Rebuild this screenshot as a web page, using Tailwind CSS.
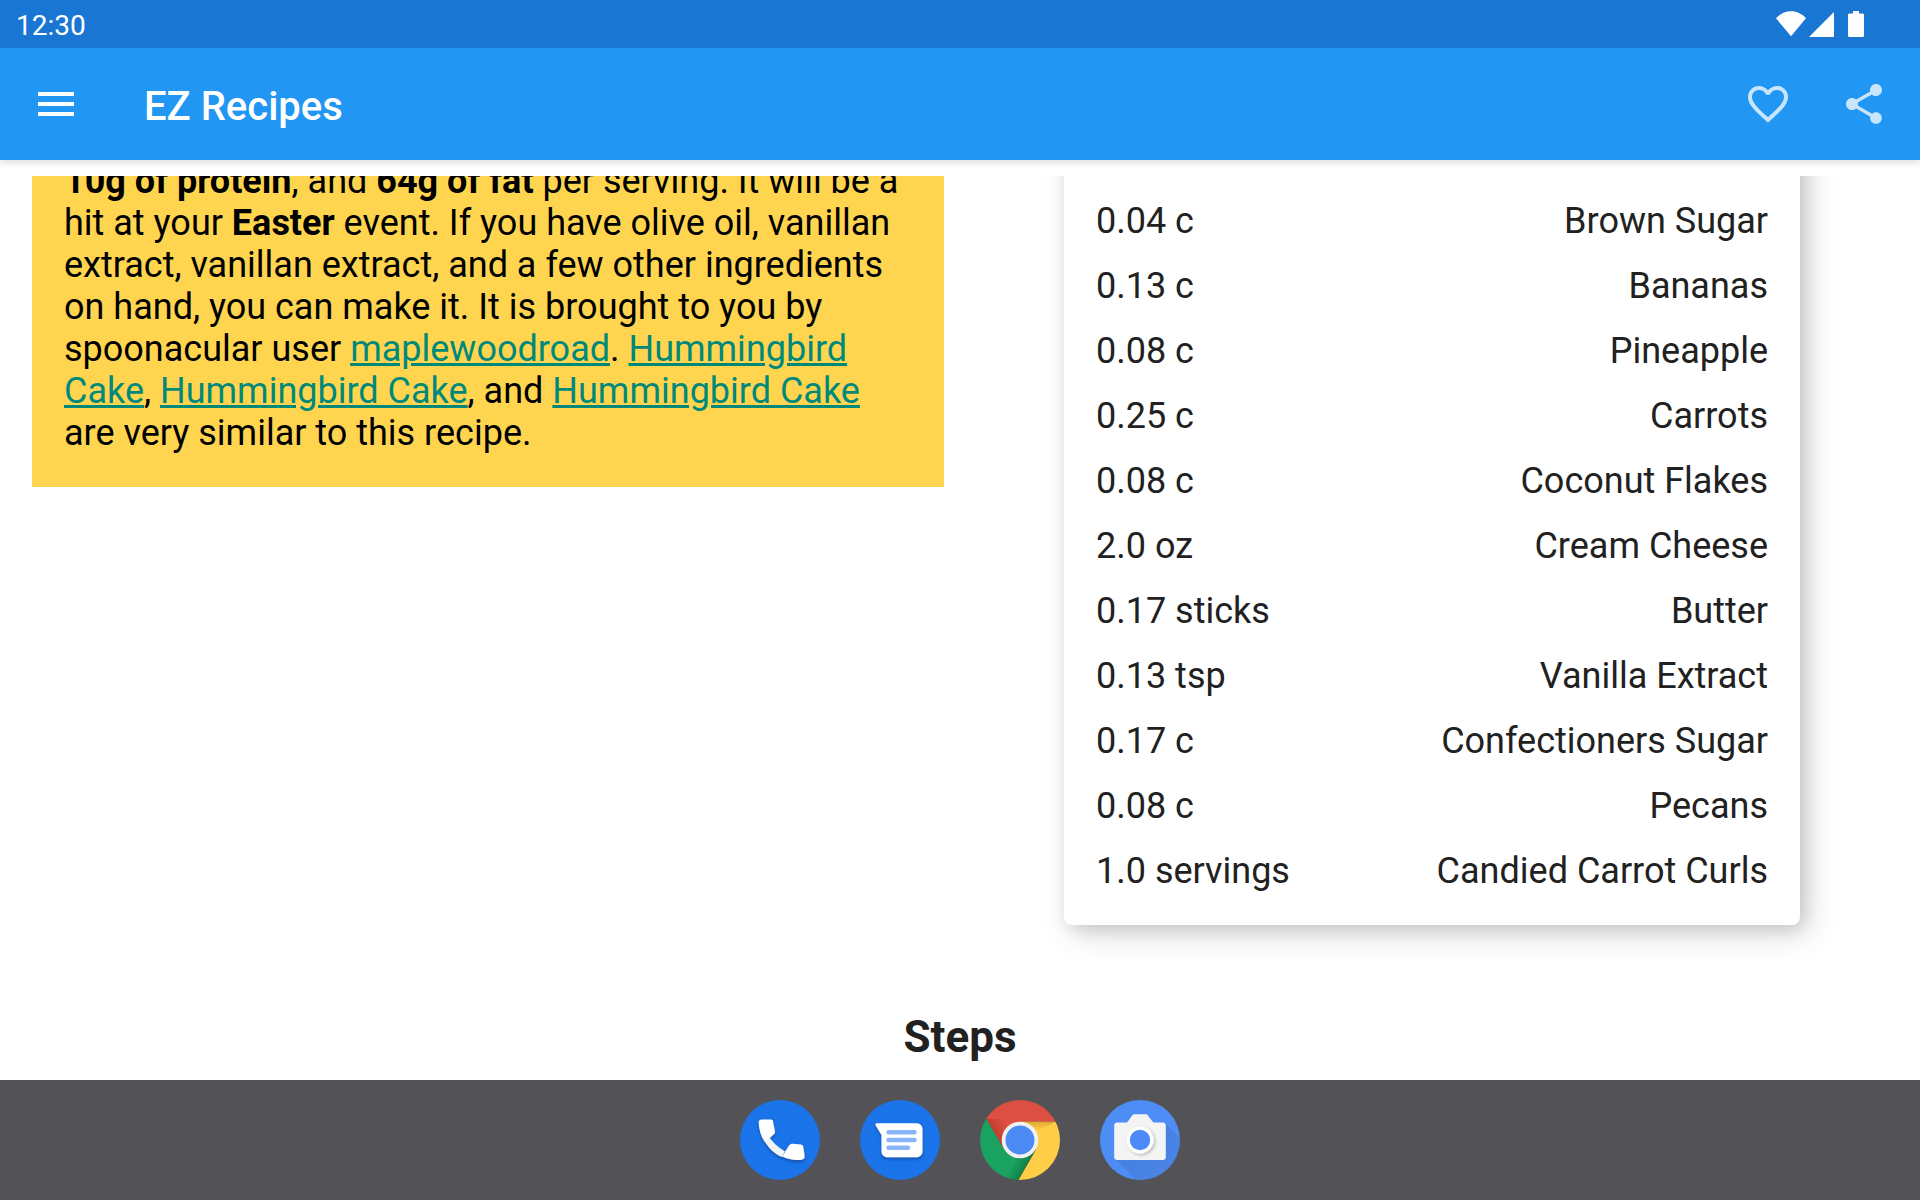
<!DOCTYPE html>
<html lang="en">
<head>
<meta charset="utf-8">
<meta name="viewport" content="width=device-width, initial-scale=1">
<title>EZ Recipes</title>
<script src="https://cdn.jsdelivr.net/npm/@tailwindcss/browser@4"></script>
</head>
<body class="flex h-screen flex-col overflow-hidden bg-white font-[Roboto,sans-serif] text-[#212121]">

  <!-- System status bar -->
  <div class="relative z-20 flex h-12 shrink-0 items-center justify-between bg-[#1976d2] pr-14 pl-4 text-white">
    <time class="pt-1 text-[28px] leading-8">12:30</time>
    <div class="flex items-center">
      <svg class="h-[26px] w-[30px]" viewBox="0 0 30 26" fill="currentColor" aria-label="Wi-Fi"><path d="M0 7.300C3.800 3 9 .3 15 .3s11.200 2.700 15 7L15 25.300z"/></svg>
      <svg class="ml-[3px] h-[26px] w-[25px]" viewBox="0 0 25 26" fill="currentColor" aria-label="Mobile signal"><path d="M25 1v25H0z"/></svg>
      <svg class="ml-[14px] h-[26px] w-4" viewBox="0 0 16 26" fill="currentColor" aria-label="Battery"><path d="M5 0h6v2.500h3.500c.9 0 1.500.6 1.500 1.500v20.500c0 .9-.6 1.500-1.500 1.500h-13C.6 26 0 25.400 0 24.500V4c0-.9.600-1.500 1.500-1.500H5z"/></svg>
    </div>
  </div>

  <!-- App bar -->
  <header class="relative z-10 flex h-28 shrink-0 items-center bg-[#2196f3] px-8 text-white shadow-[0_2px_8px_rgba(0,0,0,0.16)]">
    <button type="button" aria-label="Open menu" class="size-12">
      <svg class="size-12" viewBox="0 0 24 24" fill="currentColor"><path d="M3 18h18v-2H3v2zm0-5h18v-2H3v2zm0-7v2h18V6H3z"/></svg>
    </button>
    <h1 class="ml-16 pt-[6px] text-[40px] leading-12 font-medium">EZ Recipes</h1>
    <div class="ml-auto flex gap-12 text-white/75">
      <button type="button" aria-label="Add to favorites" class="size-12">
        <svg class="size-12" viewBox="0 0 24 24" fill="currentColor"><path d="M16.500 3c-1.740 0-3.410.81-4.500 2.090C10.910 3.810 9.240 3 7.500 3 4.420 3 2 5.420 2 8.500c0 3.780 3.400 6.860 8.550 11.540L12 21.350l1.450-1.320C18.600 15.360 22 12.280 22 8.500 22 5.420 19.580 3 16.500 3zm-4.400 15.550l-.1.100-.1-.1C7.140 14.240 4 11.390 4 8.500 4 6.500 5.500 5 7.500 5c1.540 0 3.040.99 3.570 2.360h1.870C13.460 5.990 14.960 5 16.500 5c2 0 3.500 1.500 3.500 3.500 0 2.890-3.140 5.740-7.900 10.050z"/></svg>
      </button>
      <button type="button" aria-label="Share" class="size-12">
        <svg class="size-12" viewBox="0 0 24 24" fill="currentColor"><path d="M18 16.080c-.76 0-1.440.3-1.960.77L8.910 12.700c.05-.23.090-.46.090-.7s-.04-.47-.09-.7l7.050-4.110c.54.5 1.250.81 2.040.81 1.660 0 3-1.340 3-3s-1.340-3-3-3-3 1.340-3 3c0 .24.040.47.090.7L8.040 9.810C7.500 9.310 6.790 9 6 9c-1.660 0-3 1.340-3 3s1.340 3 3 3c.79 0 1.500-.31 2.040-.81l7.120 4.160c-.05.21-.08.43-.08.65 0 1.610 1.310 2.920 2.920 2.920s2.920-1.310 2.920-2.920-1.310-2.920-2.920-2.920z"/></svg>
      </button>
    </div>
  </header>

  <!-- Recipe, scrolled part way down -->
  <main class="mt-4 min-h-0 flex-1 overflow-hidden">
    <div class="grid grid-cols-2 items-start">
      <section class="-mt-4 mr-4 ml-8 bg-[#ffd54f] px-8 pb-[33px] text-[36px] leading-[42px] text-black">
        <p><b>10g of protein</b>, and <b>64g of fat</b> per serving. It will be a hit at your <b>Easter</b> event. If you have olive oil, vanillan extract, vanillan extract, and a few other ingredients on hand, you can make it. It is brought to you by spoonacular user <a href="#" class="text-[#00897b] underline">maplewoodroad</a>. <a href="#" class="text-[#00897b] underline">Hummingbird Cake</a>, <a href="#" class="text-[#00897b] underline">Hummingbird Cake</a>, and <a href="#" class="text-[#00897b] underline">Hummingbird Cake</a> are very similar to this recipe.</p>
      </section>

      <section class="-mt-12 mr-30 ml-26 rounded-lg bg-white px-8 pt-[61px] pb-[21px] shadow-[8px_8px_32px_rgba(0,0,0,0.16),4px_4px_16px_rgba(0,0,0,0.12)]">
        <table class="w-full text-[36px] leading-[65px]" aria-label="Ingredients">
          <tbody>
            <tr><td>0.04 c</td><td class="text-right">Brown Sugar</td></tr>
            <tr><td>0.13 c</td><td class="text-right">Bananas</td></tr>
            <tr><td>0.08 c</td><td class="text-right">Pineapple</td></tr>
            <tr><td>0.25 c</td><td class="text-right">Carrots</td></tr>
            <tr><td>0.08 c</td><td class="text-right">Coconut Flakes</td></tr>
            <tr><td>2.0 oz</td><td class="text-right">Cream Cheese</td></tr>
            <tr><td>0.17 sticks</td><td class="text-right">Butter</td></tr>
            <tr><td>0.13 tsp</td><td class="text-right">Vanilla Extract</td></tr>
            <tr><td>0.17 c</td><td class="text-right">Confectioners Sugar</td></tr>
            <tr><td>0.08 c</td><td class="text-right">Pecans</td></tr>
            <tr><td>1.0 servings</td><td class="text-right">Candied Carrot Curls</td></tr>
          </tbody>
        </table>
      </section>
    </div>
    <h2 class="mt-[84px] text-center text-[44px] leading-14 font-bold">Steps</h2>
  </main>

  <!-- Dock -->
  <nav aria-label="Dock" class="flex h-30 shrink-0 items-center justify-center gap-10 bg-[#535257]">
    <a href="#" aria-label="Phone">
      <svg class="size-20" viewBox="0 0 80 80">
        <defs><filter id="drop" x="-30%" y="-30%" width="160%" height="160%"><feDropShadow dx="0" dy="2" stdDeviation="1.500" flood-color="#0b3a85" flood-opacity=".6"/></filter></defs>
        <circle cx="40" cy="40" r="40" fill="#1a73e8"/>
        <g filter="url(#drop)">
          <path d="M29.500 37.500c3.800 5.200 8 9.300 15.300 13.700L42 57c-7.500-3.300-13-8.500-17-15.200z" fill="#f1f3f4"/>
          <path d="M21.500 19.500h9.300c1.200 0 2 .8 2.200 1.800l2 10.500c.1.700-.1 1.400-.6 1.900L25 42.300c-4-6-6.200-13-6.300-19.800 0-1.700 1.200-3 2.800-3z" fill="#fff"/>
          <path d="M42.300 56.600l6.500-10.900c1.400-1.600 2.500-2 4-1.900l8 .7c1.400.2 2.300 1.100 2.500 2.500l1.300 8.700c.3 2.300-1 3.800-3 4-6.700.9-13.300-.2-19.300-3.100z" fill="#fff"/>
        </g>
      </svg>
    </a>
    <a href="#" aria-label="Messages">
      <svg class="size-20" viewBox="0 0 80 80">
        <circle cx="40" cy="40" r="40" fill="#1a73e8"/>
        <path filter="url(#drop)" d="M16.500 23.300h40c3.500 0 6 2.500 6 6v22c0 3.500-2.500 6-6 6h-29c-3.500 0-6-2.500-6-6V35l-5.700-9.300c-.6-1.200-.1-2.400.7-2.400z" fill="#fff"/>
        <path d="M28.500 32.200h26M28.500 40h26M28.500 47.800h19.500" stroke="#8ab4f8" stroke-width="4.400" stroke-linecap="round"/>
      </svg>
    </a>
    <a href="#" aria-label="Chrome">
      <svg class="size-20" viewBox="0 0 80 80">
        <defs>
          <clipPath id="disc"><circle cx="40" cy="40" r="40"/></clipPath>
          <linearGradient id="redShade" gradientUnits="userSpaceOnUse" x1="14" y1="32" x2="27" y2="24.500"><stop offset="0" stop-color="#a52714" stop-opacity=".45"/><stop offset="1" stop-color="#a52714" stop-opacity="0"/></linearGradient>
          <linearGradient id="greenShade" gradientUnits="userSpaceOnUse" x1="46" y1="68" x2="34" y2="61"><stop offset="0" stop-color="#055524" stop-opacity=".45"/><stop offset="1" stop-color="#055524" stop-opacity="0"/></linearGradient>
          <linearGradient id="yellowShade" gradientUnits="userSpaceOnUse" x1="0" y1="21.700" x2="0" y2="30"><stop offset="0" stop-color="#b7791a" stop-opacity=".45"/><stop offset="1" stop-color="#b7791a" stop-opacity="0"/></linearGradient>
        </defs>
        <g clip-path="url(#disc)">
          <path d="M0 0h80v21.700H40L24 49.200 6.500 19z" fill="#dd4f43"/>
          <path d="M6.500 19L24 49.200 40 58.300l13.500-6L38.500 80H0V8z" fill="#1aa260"/>
          <path d="M80 21.700H40l16 27.500L38.500 80H80z" fill="#ffcd46"/>
          <path d="M6.500 19l16.500 28 10-14V19z" fill="url(#redShade)"/>
          <path d="M55.500 50.500L38.500 80H20l15-25z" fill="url(#greenShade)"/>
          <path d="M40 21.700h36L56 32z" fill="url(#yellowShade)"/>
        </g>
        <circle cx="40" cy="40" r="18.300" fill="#f1f1f1"/>
        <circle cx="40" cy="40" r="14.500" fill="#4c8bf5"/>
      </svg>
    </a>
    <a href="#" aria-label="Camera">
      <svg class="size-20" viewBox="0 0 80 80">
        <defs>
          <linearGradient id="longShade" x1=".3" y1=".3" x2="1" y2="1"><stop offset="0" stop-color="#3f78d4" stop-opacity=".6"/><stop offset="1" stop-color="#4a80dc" stop-opacity=".6"/></linearGradient>
          <filter id="lens" x="-30%" y="-30%" width="170%" height="170%"><feDropShadow dx="1.500" dy="1.500" stdDeviation="1.500" flood-color="#000" flood-opacity=".25"/></filter>
        </defs>
        <circle cx="40" cy="40" r="40" fill="#4f8df6"/>
        <path clip-path="url(#disc)" d="M15 59l24 24h44V41L64.500 23z" fill="url(#longShade)"/>
        <path d="M17 22.500h10l5-6.800c.8-1 1.500-1.400 2.700-1.400h10.800c1.200 0 2 .5 2.600 1.400l5.200 6.800H63c1.600 0 2.800 1.200 2.800 2.800v32c0 1.600-1.200 2.800-2.800 2.800H17c-1.600 0-2.800-1.200-2.800-2.800v-32c0-1.600 1.200-2.800 2.800-2.800z" fill="#f4f4f4"/>
        <circle cx="40" cy="40" r="13.500" fill="#fff" filter="url(#lens)"/>
        <circle cx="40" cy="40" r="10.200" fill="#4c8bf5"/>
      </svg>
    </a>
  </nav>
</body>
</html>
